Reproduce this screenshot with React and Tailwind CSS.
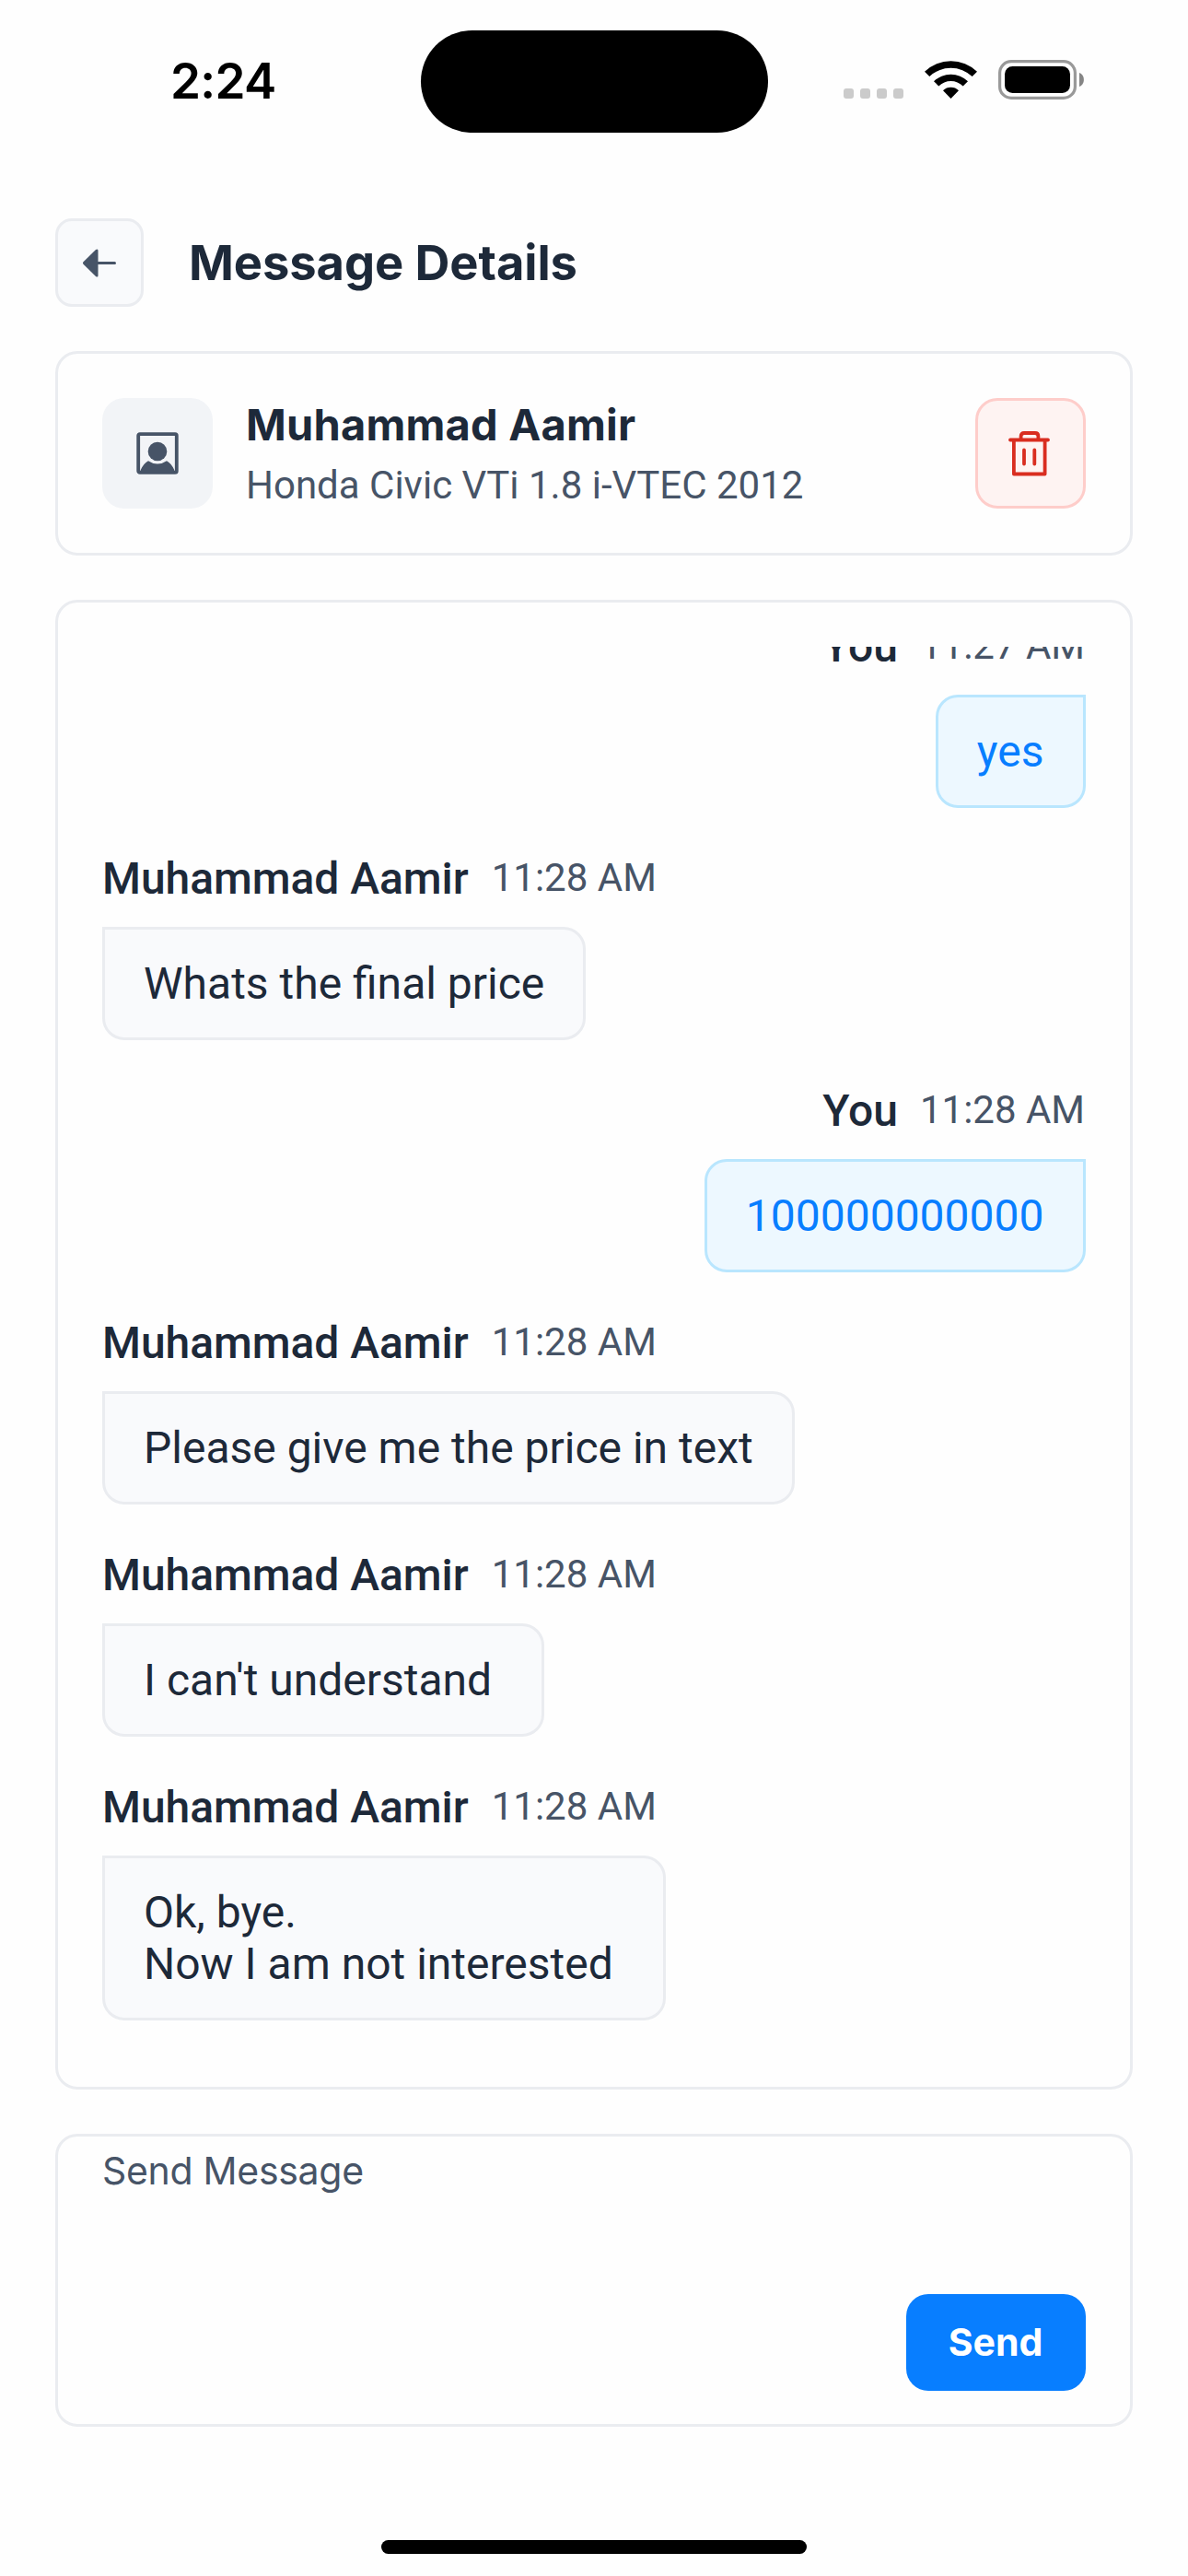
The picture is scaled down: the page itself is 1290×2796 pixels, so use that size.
const messages = [
  { from: "You", time: "11:27 AM", text: "yes", mine: true },
  { from: "Muhammad Aamir", time: "11:28 AM", text: "Whats the final price" },
  { from: "You", time: "11:28 AM", text: "100000000000", mine: true },
  { from: "Muhammad Aamir", time: "11:28 AM", text: "Please give me the price in text" },
  { from: "Muhammad Aamir", time: "11:28 AM", text: "I can't understand " },
  { from: "Muhammad Aamir", time: "11:28 AM", text: "Ok, bye.\nNow I am not interested " },
];

function StatusBar() {
  return (
    <div className="flex h-[177px] shrink-0 items-start font-['Inter',sans-serif]">
      <div className="mt-[56px] w-[457px] pl-[185px] text-[53px] leading-[64px] font-semibold tracking-[-0.7px] text-black">2:24</div>
      <div className="mt-[33px] h-[111px] w-[377px] rounded-full bg-black" />
      <div className="mt-[65px] ml-[82px] flex h-[43px]">
        <div className="flex items-end gap-[7px] pb-px">
          {[0, 1, 2, 3].map((i) => (
            <div key={i} className="size-[11px] rounded-[3px] bg-[#cbcbcb]" />
          ))}
        </div>
        <svg className="ml-[23px] h-[42px] w-[57px]" viewBox="0 0 57 42">
          <path d="M0 12.8A41 41 0 0 1 57 12.8L51.7 18.1A33.5 33.5 0 0 0 5.3 18.1Z" />
          <path d="M10 23.2A26.5 26.5 0 0 1 47 23.2L41.7 28.4A19 19 0 0 0 15.3 28.4Z" />
          <path d="M20 33.2A12.4 12.4 0 0 1 37 33.2L28.5 42Z" />
        </svg>
        <svg className="ml-[23px] h-[43px] w-[93px]" viewBox="0 0 93 43">
          <rect x="1.6" y="1.6" width="81.8" height="39.8" rx="12.5" fill="none" stroke="#999" strokeWidth="3.2" />
          <rect x="7" y="7" width="71" height="29" rx="8.5" />
          <path d="M88 14C94.5 16 94.5 27 88 29Z" fill="#858585" />
        </svg>
      </div>
    </div>
  );
}

function Message({ from, time, text, mine }) {
  return (
    <div className={mine ? "flex flex-col items-end" : "flex flex-col items-start"}>
      <div className={mine ? "flex h-[57px] items-center gap-[24px] pr-px" : "flex h-[57px] items-center gap-[25px]"}>
        <span className="text-[48px] leading-[57px] font-medium tracking-[-0.05px] text-[#1d2939]">{from}</span>
        <span className="pb-[2px] text-[42px] leading-[49px] text-[#475467]">{time}</span>
      </div>
      <div
        className={
          mine
            ? "mt-[24px] rounded-[24px] rounded-tr-none border-3 border-[#b9e6fe] bg-[#edf8ff] pr-[42.5px] pl-[41.5px] pt-[31px] pb-[30px] text-[48px] leading-[56px] whitespace-pre text-[#087eff]"
            : "mt-[24px] rounded-[24px] rounded-tl-none border-3 border-[#eaecf0] bg-[#f9fafc] px-[42px] pt-[31px] pb-[30px] text-[48px] leading-[56px] whitespace-pre text-[#1d2939]"
        }
      >
        {text}
      </div>
    </div>
  );
}

export default function App() {
  return (
    <div className="flex h-[2796px] w-[1290px] flex-col overflow-hidden bg-[#fefefe] font-['Roboto',sans-serif]">
      <StatusBar />
      <header className="mt-[60px] ml-[60px] flex h-[96px] shrink-0 items-center">
        <button className="flex size-[96px] items-center justify-center rounded-[18px] border-3 border-[#eaecf0] bg-[#f9fafc]">
          <svg className="h-[31px] w-[36px]" viewBox="0 0 36 31" fill="#475467">
            <path d="M0.5 14.3L14 0.9Q16.5 -0.5 16.5 2V29Q16.5 31.5 14 30.1L0.5 16.7Q-0.5 15.5 0.5 14.3Z" />
            <rect x="15" y="14" width="21" height="3" rx="1.5" />
          </svg>
        </button>
        <h1 className="ml-[49px] font-['Inter',sans-serif] text-[52.5px] leading-[64px] font-bold tracking-[-0.1px] text-[#1d2939]">Message Details</h1>
      </header>

      <section className="mx-[60px] mt-[48px] flex h-[222px] shrink-0 items-center rounded-[24px] border-3 border-[#eaecf0] px-[48px]">
        <div className="flex size-[120px] items-center justify-center rounded-[24px] bg-[#f2f4f7]">
          <svg className="size-[46px]" viewBox="0 0 46 46" fill="#475467">
            <rect x="2.2" y="2.2" width="41.6" height="41.6" rx="1.6" fill="none" stroke="#475467" strokeWidth="3.8" />
            <circle cx="23" cy="21" r="10.3" />
            <path d="M4 43Q7 34.5 13 31.2Q23 38 33 31.2Q39 34.5 42 43Z" />
          </svg>
        </div>
        <div className="ml-[36px] grow">
          <div className="font-['Inter',sans-serif] text-[47px] leading-[58px] font-bold tracking-[0.2px] text-[#1d2939]">Muhammad Aamir</div>
          <div className="mt-[12px] mb-px text-[42px] leading-[49px] text-[#475467]">Honda Civic VTi 1.8 i-VTEC 2012</div>
        </div>
        <button className="flex size-[120px] items-center justify-center rounded-[24px] border-3 border-[#fecdca] bg-[#fef3f2]">
          <svg className="mr-[3px] mb-px h-[50px] w-[45px]" viewBox="0 0 45 50" fill="none" stroke="#d92d20" strokeWidth="3.8" strokeLinecap="round" strokeLinejoin="round">
            <path d="M2 10.5H43M5.9 10.5V47.5H39.6V10.5M13.6 10.5V6.5Q13.6 3 17.1 3H28.9Q32.4 3 32.4 6.5V10.5M17 21.5V36.5M28.3 21.5V36.5" />
          </svg>
        </button>
      </section>

      <section className="mx-[60px] mt-[48px] h-[1617px] shrink-0 rounded-[24px] border-3 border-[#eaecf0] p-[48px]">
        <div className="h-full overflow-hidden">
          <div className="-mt-[29px] flex flex-col gap-[48px]">
            {messages.map((m, i) => (
              <Message key={i} {...m} />
            ))}
          </div>
        </div>
      </section>

      <section className="mx-[60px] mt-[48px] flex h-[318px] shrink-0 flex-col justify-between rounded-[24px] border-3 border-[#eaecf0] px-[48px] pt-[11px] pb-[36px] font-['Inter',sans-serif]">
        <div className="text-[41px] leading-[52px] tracking-[-0.3px] text-[#475467]">Send Message</div>
        <button className="h-[105px] w-[195px] self-end rounded-[24px] bg-[#087eff] pr-px pb-[2px] text-[41px] leading-[50px] font-bold text-white">Send</button>
      </section>

      <div className="mt-[123px] h-[15px] w-[462px] shrink-0 self-center rounded-full bg-black" />
    </div>
  );
}
